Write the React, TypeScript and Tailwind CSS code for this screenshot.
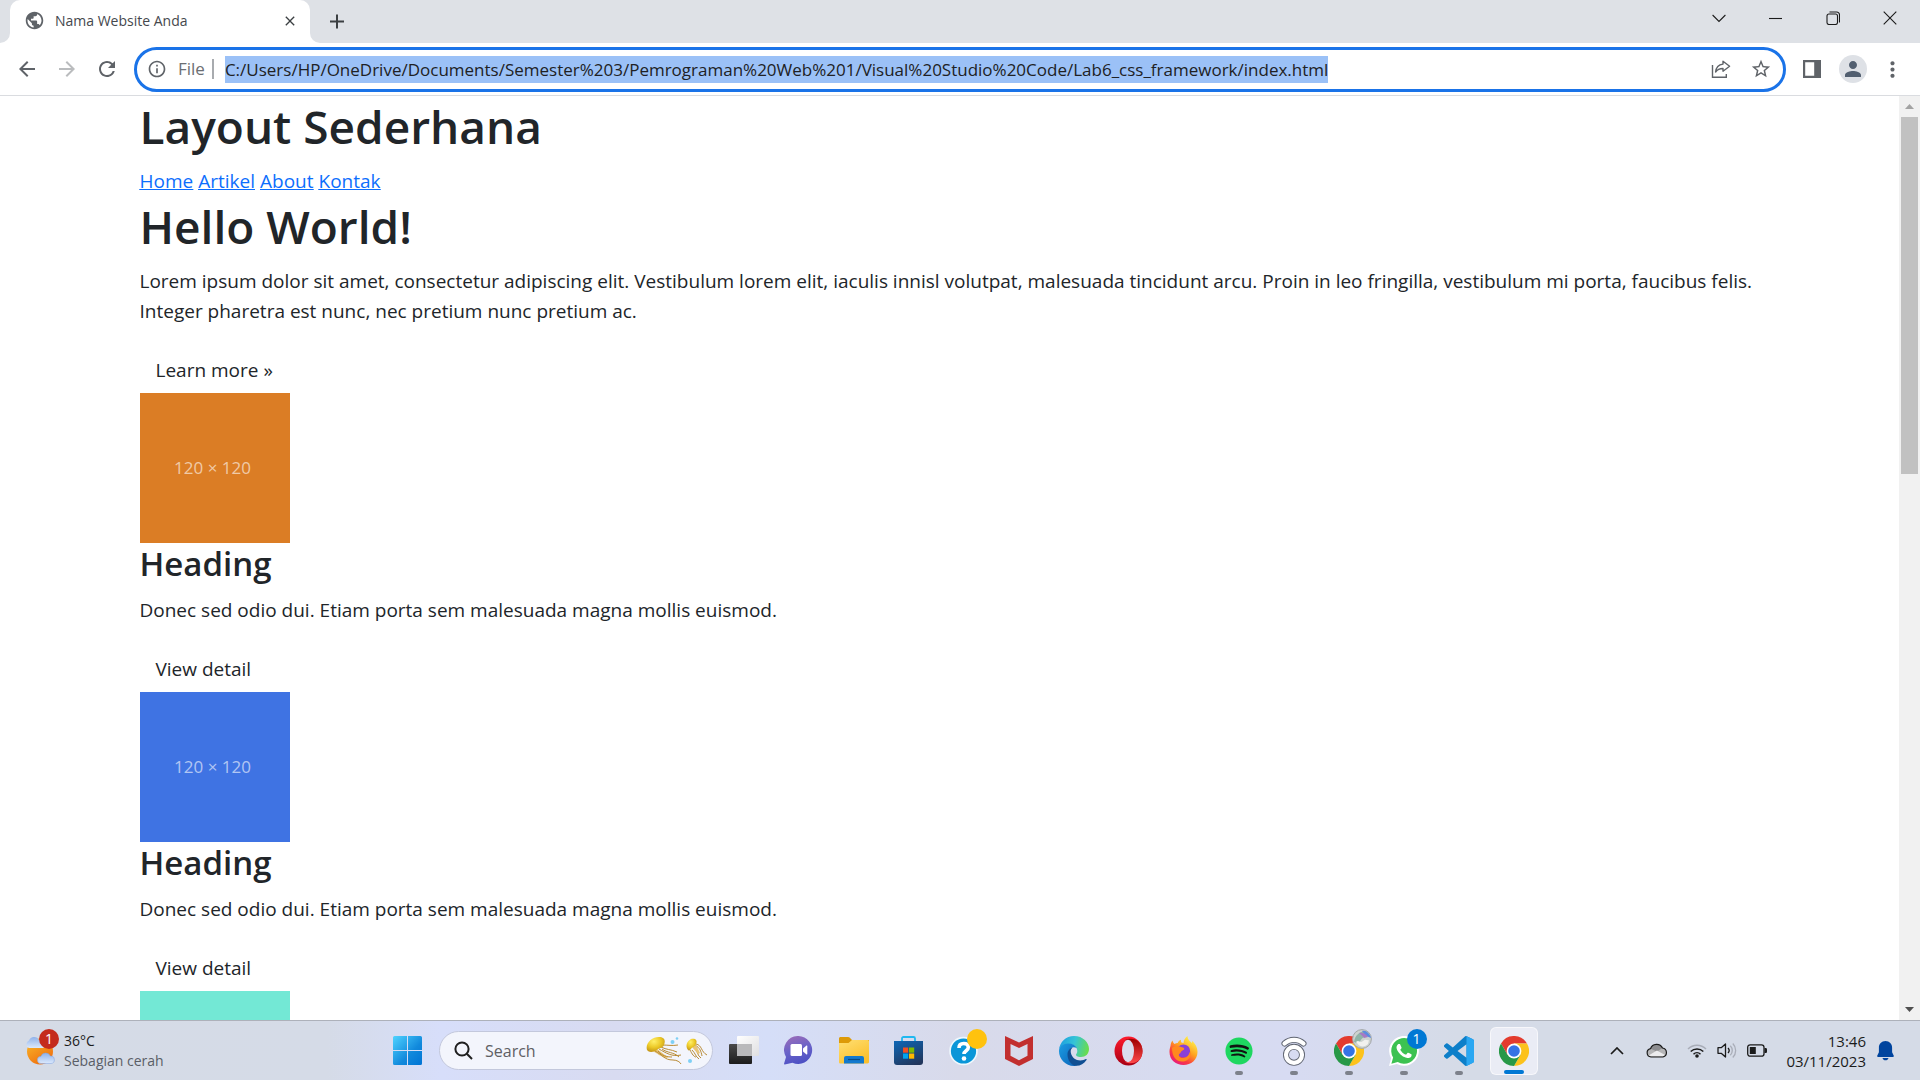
import type { ReactNode } from "react";
import {
  MdAdd,
  MdArrowBack,
  MdArrowForward,
  MdClose,
  MdInfoOutline,
  MdMoreVert,
  MdPerson,
  MdPublic,
  MdRefresh,
  MdStarBorder,
} from "react-icons/md";
import { FaSpotify } from "react-icons/fa";

const URL_TEXT =
  "C:/Users/HP/OneDrive/Documents/Semester%203/Pemrograman%20Web%201/Visual%20Studio%20Code/Lab6_css_framework/index.html";

/* ---------- Browser chrome ---------- */

function WindowButton({ label, children }: { label: string; children: ReactNode }) {
  return (
    <button aria-label={label} className="flex h-9 w-[57px] items-center justify-center">
      <svg width="14" height="14" viewBox="0 0 14 14" fill="none" stroke="#1b1b1b" strokeWidth="1.1">
        {children}
      </svg>
    </button>
  );
}

function TabStrip() {
  return (
    <div className="flex h-[43px] shrink-0 items-start bg-[#dee1e6] pr-[2px] pl-[10px]">
      <div className="relative flex h-[43px] w-[300px] items-center rounded-t-[10px] bg-white pr-[11px] pb-[2px] pl-[14px]">
        <svg className="absolute bottom-0 -left-[10px]" width="10" height="10" viewBox="0 0 10 10">
          <path d="M10 0v10H0A10 10 0 0 0 10 0z" fill="#fff" />
        </svg>
        <svg className="absolute -right-[10px] bottom-0" width="10" height="10" viewBox="0 0 10 10">
          <path d="M0 0v10h10A10 10 0 0 1 0 0z" fill="#fff" />
        </svg>
        <MdPublic size={21} color="#5f6368" />
        <span className="ml-[10px] flex-1 text-[14px] text-[#45484d]">Nama Website Anda</span>
        <button aria-label="Close tab" className="flex size-[18px] items-center justify-center text-[#3c4043]">
          <MdClose size={16} />
        </button>
      </div>
      <button aria-label="New tab" className="ml-[15px] flex h-[42px] w-6 items-center justify-center text-[#3c4043]">
        <MdAdd size={25} />
      </button>
      <div className="ml-auto flex">
        <WindowButton label="Search tabs">
          <path d="M.6 4l6.400 6.400L13.400 4" />
        </WindowButton>
        <WindowButton label="Minimize">
          <path d="M0 7.500h13" />
        </WindowButton>
        <WindowButton label="Restore">
          <rect x="1" y="3" width="10.500" height="10.500" rx="2" />
          <path d="M3.500 1h7.200a2.800 2.800 0 0 1 2.800 2.800v7.700" />
        </WindowButton>
        <WindowButton label="Close">
          <path d="M.7.7l12.600 12.600M13.300.7L.7 13.300" />
        </WindowButton>
      </div>
    </div>
  );
}

function Toolbar() {
  return (
    <div className="flex h-[53px] shrink-0 items-center border-b border-[#dadce0] bg-white pr-[15px] pl-[15px]">
      <button aria-label="Back" className="w-6 text-[#5f6368]">
        <MdArrowBack size={24} />
      </button>
      <button aria-label="Forward" className="ml-4 w-6 text-[#babcbe]">
        <MdArrowForward size={24} />
      </button>
      <button aria-label="Reload" className="ml-4 w-6 text-[#5f6368]">
        <MdRefresh size={24} />
      </button>
      <div className="ml-[15px] flex h-[45px] flex-1 items-center rounded-full border-[3px] border-[#1a73e8] pr-[11px] pl-[10px]">
        <MdInfoOutline size={20} color="#5f6368" />
        <label htmlFor="address" className="ml-[11px] text-[17px] text-[#6b6e73]">
          File
        </label>
        <span className="ml-[7px] h-5 w-[2px] bg-[#a8abaf]" />
        <input
          id="address"
          defaultValue={URL_TEXT}
          className="ml-[11px] h-[27px] field-sizing-content bg-[#9bc1f7] text-[17px] text-[#202124] outline-none"
        />
        <button aria-label="Share" className="ml-auto">
          <svg width="20" height="20" viewBox="0 0 20 20" fill="none" stroke="#5f6368" strokeWidth="1.400">
            <path d="M1.500 6v12.300h13.800V15" />
            <path d="M12 2.200l6.600 5-6.600 5V9.500c-3.500 0-5.700 1-7.400 3.500.4-4.200 3-7.400 7.400-7.900z" strokeLinejoin="round" />
          </svg>
        </button>
        <button aria-label="Bookmark this page" className="ml-[19px] text-[#5f6368]">
          <MdStarBorder size={22} />
        </button>
      </div>
      <button aria-label="Side panel" className="ml-[17px]">
        <svg width="18" height="18" viewBox="0 0 18 18">
          <path fill="#5f6368" fillRule="evenodd" d="M0 0h18v18H0zM2.200 2.200v13.600h9V2.200z" />
        </svg>
      </button>
      <button
        aria-label="Profile"
        className="ml-[18px] flex size-7 items-center justify-center rounded-full bg-[#dee1e6] text-[#525f70]"
      >
        <MdPerson size={24} />
      </button>
      <button aria-label="Menu" className="ml-[13px] text-[#5f6368]">
        <MdMoreVert size={25} />
      </button>
    </div>
  );
}

/* ---------- Web page ---------- */

function PageTitle({ children }: { children: ReactNode }) {
  return <h1 className="mb-[10px] text-[46px] leading-[60px] font-semibold">{children}</h1>;
}

function TextButton({ children }: { children: ReactNode }) {
  return <button className="block h-[47px] px-4 text-[19px] leading-[30px]">{children}</button>;
}

function Placeholder({ color }: { color: string }) {
  return (
    <div
      role="img"
      aria-label="120 × 120"
      className="flex size-[150px] items-center justify-center pr-1 text-[17px] text-white/60"
      style={{ backgroundColor: color }}
    >
      120 × 120
    </div>
  );
}

const boxes = ["#db7d25", "#3f73e3", "#73e8d5"];

function WebPage() {
  return (
    <div className="flex min-h-0 flex-1 bg-white">
      <div className="min-w-0 flex-1 overflow-hidden">
        <main className="mx-auto max-w-[1650px] px-[15px] text-[19px] leading-[30px] text-[#212529]">
          <PageTitle>Layout Sederhana</PageTitle>
          <nav className="flex gap-[5px] text-[#0d6efd] underline">
            <a href="#home">Home</a>
            <a href="#artikel">Artikel</a>
            <a href="#about">About</a>
            <a href="#kontak">Kontak</a>
          </nav>
          <PageTitle>Hello World!</PageTitle>
          <p className="mb-5">
            Lorem ipsum dolor sit amet, consectetur adipiscing elit. Vestibulum lorem elit, iaculis innisl volutpat,
            malesuada tincidunt arcu. Proin in leo fringilla, vestibulum mi porta, faucibus felis. Integer pharetra est
            nunc, nec pretium nunc pretium ac.
          </p>
          <TextButton>Learn more »</TextButton>
          {boxes.map((color) => (
            <section key={color}>
              <Placeholder color={color} />
              <h3 className="mb-[10px] text-[33px] leading-[42px] font-semibold">Heading</h3>
              <p className="mb-5">Donec sed odio dui. Etiam porta sem malesuada magna mollis euismod.</p>
              <TextButton>View detail</TextButton>
            </section>
          ))}
        </main>
      </div>
      <div className="flex w-[21px] shrink-0 flex-col items-center bg-[#f1f1f1]">
        <svg className="h-[21px] shrink-0" width="9" height="5" viewBox="0 0 9 5">
          <path d="M4.500 0L9 5H0z" fill="#a3a3a3" />
        </svg>
        <div className="min-h-0 w-[17px] flex-1">
          <div className="h-[357px] bg-[#c1c1c1]" />
        </div>
        <svg className="h-[21px] shrink-0" width="9" height="5" viewBox="0 0 9 5">
          <path d="M4.500 5L9 0H0z" fill="#505050" />
        </svg>
      </div>
    </div>
  );
}

/* ---------- Taskbar icons ---------- */

function WeatherIcon() {
  return (
    <svg width="30" height="30" viewBox="0 0 30 30">
      <defs>
        <linearGradient id="sun" x1="0" y1="0" x2=".6" y2="1">
          <stop offset="0" stopColor="#f9bd2b" />
          <stop offset="1" stopColor="#f0700f" />
        </linearGradient>
        <linearGradient id="wcloud" x1="0" y1="0" x2="0" y2="1">
          <stop offset="0" stopColor="#8fb2ea" />
          <stop offset="1" stopColor="#dce9fc" />
        </linearGradient>
      </defs>
      <circle cx="15" cy="15.500" r="13" fill="url(#sun)" />
      <path d="M4 12a4 4 0 0 1 0-7.500A5.500 5.500 0 0 1 14 4a4 4 0 0 1 4 8z" fill="url(#wcloud)" />
      <path
        d="M16 27.500a3.600 3.600 0 0 1 0-7.200 5 5 0 0 1 9.300-.2 3.700 3.700 0 0 1 .7 7.400z"
        fill="url(#wcloud)"
        stroke="#7fa3e0"
        strokeWidth=".5"
      />
    </svg>
  );
}

function StartIcon() {
  return (
    <svg width="29" height="29" viewBox="0 0 29 29">
      <defs>
        <linearGradient id="win" gradientUnits="userSpaceOnUse" x1="0" y1="0" x2="29" y2="29">
          <stop offset="0" stopColor="#4fd3ff" />
          <stop offset=".6" stopColor="#1189dc" />
          <stop offset="1" stopColor="#0073d4" />
        </linearGradient>
      </defs>
      <path
        fill="url(#win)"
        d="M1.500 0H14v14H0V1.500A1.500 1.500 0 0 1 1.500 0zM15 0h12.500A1.500 1.500 0 0 1 29 1.500V14H15zM0 15h14v14H1.500A1.500 1.500 0 0 1 0 27.500zM15 15h14v12.500a1.500 1.500 0 0 1-1.500 1.500H15z"
      />
    </svg>
  );
}

function Jellyfish() {
  return (
    <svg width="62" height="30" viewBox="0 0 62 30" fill="none">
      <defs>
        <radialGradient id="jelly" cx=".4" cy=".3" r=".8">
          <stop offset="0" stopColor="#fff06a" />
          <stop offset=".5" stopColor="#ecc927" />
          <stop offset="1" stopColor="#b98812" />
        </radialGradient>
      </defs>
      <path d="M9 12c5 2 8 7 14 9l-3 1c-5-1-9-5-14-7z" fill="#e8c477" />
      <path
        d="M16 9c6 0 10 1 16 0M15 11c6 3 9 2 16 5M13 13c7 4 13 8 22 6M9 15c8 4 9 9 18 9 4 0 7 2 8 4M16 13c5 4 12 3 17 8M12 15c4 5 9 6 14 6"
        stroke="#b98b35"
        strokeWidth="1"
      />
      <path d="M1 14C-1 7 6 1 13 1c5 0 7 3 5 8-1 3-5 3-7 5-3 2-8 3-10 0z" fill="url(#jelly)" />
      <path
        d="M48 12c4 2 3 8 7 10M46 14c4 4 3 6 7 9M49 9c5 3 6 6 7 11M50 8c6 1 5 8 11 11M44 14c2 4 4 7 6 7"
        stroke="#b98b35"
        strokeWidth="1"
      />
      <path d="M46 11l6 7 2-1-4-8z" fill="#e8c477" />
      <path d="M42 14c-3-4-1-9 3-11 4-1 7 1 5 5-1 3-4 3-5 5-1 1-2 2-3 1z" fill="url(#jelly)" />
      <circle cx="26.500" cy="6" r="2" fill="#7fd0f5" />
      <circle cx="31" cy="2.500" r="1.300" fill="#7fd0f5" />
      <circle cx="44" cy="25" r="2" fill="#7fd0f5" />
    </svg>
  );
}

function TaskViewIcon() {
  return (
    <svg width="30" height="29" viewBox="0 0 30 29">
      <defs>
        <linearGradient id="tvd" x1="0" y1="0" x2="0" y2="1">
          <stop offset="0" stopColor="#4a4a4a" />
          <stop offset="1" stopColor="#1c1c1c" />
        </linearGradient>
        <linearGradient id="tvl" x1="0" y1="0" x2="1" y2="1">
          <stop offset="0" stopColor="#ffffff" />
          <stop offset="1" stopColor="#dfdfe1" />
        </linearGradient>
      </defs>
      <rect y="8" width="23" height="20" rx="1" fill="url(#tvd)" />
      <rect x="8" y="0" width="22" height="20" rx="1" fill="url(#tvl)" />
      <path d="M8 8h15v12H8z" fill="#b9b9bb" />
    </svg>
  );
}

function ChatIcon() {
  return (
    <svg width="29" height="29" viewBox="0 0 29 29">
      <defs>
        <linearGradient id="chat" x1=".2" y1="0" x2=".5" y2="1">
          <stop offset="0" stopColor="#9a6cb8" />
          <stop offset=".5" stopColor="#6a63c8" />
          <stop offset="1" stopColor="#4c50c4" />
        </linearGradient>
      </defs>
      <path d="M14.500 0a14 14 0 1 1-6 26.800L.8 28.400c-.6.1-.9-.3-.7-.9L2 21A14 14 0 0 1 14.500 0z" fill="url(#chat)" />
      <rect x="6.500" y="8" width="11.500" height="12" rx="1.500" fill="#fff" />
      <path d="M19 12.500l3.500-3c.4-.3.800 0 .8.400v8.200c0 .4-.4.700-.8.400l-3.500-3z" fill="#fff" />
    </svg>
  );
}

function FolderIcon() {
  return (
    <svg width="30" height="28" viewBox="0 0 30 28">
      <defs>
        <linearGradient id="fold" x1="0" y1="0" x2=".6" y2="1">
          <stop offset="0" stopColor="#ffdf73" />
          <stop offset="1" stopColor="#fbc02d" />
        </linearGradient>
      </defs>
      <path d="M0 1.500C0 .7.700 0 1.500 0h7.700c.6 0 1 .2 1.400.6L13 3H30v6H0z" fill="#dd9a08" />
      <path d="M0 6h9.500L13 3h15.500c.8 0 1.500.7 1.500 1.500V25c0 .600-.5 1.500-1.500 1.500h-27C.700 26.500 0 26 0 25z" fill="url(#fold)" />
      <path d="M5 26.500V21a2 2 0 0 1 2-2h16a2 2 0 0 1 2 2v5.500z" fill="#1379ce" />
      <path d="M9 22.500h12" stroke="#084a86" strokeWidth="1.200" />
    </svg>
  );
}

function StoreIcon() {
  return (
    <svg width="29" height="30" viewBox="0 0 29 30">
      <defs>
        <linearGradient id="store" x1=".2" y1="0" x2=".7" y2="1">
          <stop offset="0" stopColor="#0f63b0" />
          <stop offset="1" stopColor="#21365c" />
        </linearGradient>
      </defs>
      <path d="M8 7V2.500C8 1.700 8.700 1 9.500 1h10c.8 0 1.500.7 1.500 1.500V7" fill="none" stroke="#1fb8f0" strokeWidth="1.800" />
      <path d="M0 5h29v21a3 3 0 0 1-3 3H3a3 3 0 0 1-3-3z" fill="url(#store)" />
      <path d="M9 11.500h5.200v5.200H9z" fill="#f25022" />
      <path d="M15 11.500h5.200v5.200H15z" fill="#7fba00" />
      <path d="M9 17.500h5.200v5.200H9z" fill="#00a4ef" />
      <path d="M15 17.500h5.200v5.200H15z" fill="#ffb900" />
    </svg>
  );
}

function HelpIcon() {
  return (
    <svg width="30" height="30" viewBox="0 0 30 30">
      <circle cx="14.500" cy="15" r="14.300" fill="#eef8fd" />
      <circle cx="14.500" cy="15" r="12.600" fill="#0a96d8" />
      <path d="M10 12c0-3 2-4.500 4.700-4.500 2.800 0 4.600 1.500 4.600 3.900 0 3.300-4.300 3.300-4.300 6.600" fill="none" stroke="#fff" strokeWidth="3.600" />
      <circle cx="15" cy="22.500" r="2.300" fill="#fff" />
    </svg>
  );
}

function McAfeeIcon() {
  return (
    <svg width="28" height="30" viewBox="0 0 28 30">
      <path
        fillRule="evenodd"
        fill="#c22f2f"
        d="M0 0l14 6.500L28 0v23L14 30 0 23zM5.500 8v11.800l8.500 4.400 8.500-4.400V8L14 12z"
      />
    </svg>
  );
}

function EdgeIcon() {
  return (
    <svg width="30" height="30" viewBox="0 0 30 30">
      <defs>
        <linearGradient id="edgeTop" x1="0" y1=".3" x2="1" y2=".5">
          <stop offset="0" stopColor="#1d9fe0" />
          <stop offset=".5" stopColor="#35c4d6" />
          <stop offset="1" stopColor="#69dd4c" />
        </linearGradient>
        <linearGradient id="edgeLow" x1="0" y1="0" x2="1" y2="1">
          <stop offset="0" stopColor="#1b9de2" />
          <stop offset="1" stopColor="#0b61b8" />
        </linearGradient>
      </defs>
      <path
        fill="url(#edgeTop)"
        d="M0 14C.7 6 7 0 15 0c9 0 15 6.500 15 13 0 5-3.500 8-8 8-4 0-5-1.500-5-2.300 0-.7 1.300-1.300 1.300-3.700C18.300 11 14.500 8 9.500 8 4 8 .8 11 0 14z"
      />
      <path
        fill="url(#edgeLow)"
        d="M0 15C0 10.500 4 7.500 9 7.500c4.500 0 7.500 2 8.800 4.500-1-.6-2-.8-3-.8-4 0-5.500 4-5.500 7 0 6 4 11 9 11.200-1 .4-2 .6-3.300.6C6.500 30 0 23 0 15z"
      />
      <path
        fill="#104f93"
        d="M8.500 18.500c0-3.500 2-6.500 5-7-1.500 1.500-2 3-1.700 5 .8 5 5 8 9.500 8 2.500 0 4.200-.8 5.500-1.400.7-.300 1.100.2.700.8C25 27.500 21.500 29.800 17.500 29.800 12 29.500 8.500 24 8.500 18.500z"
      />
    </svg>
  );
}

function OperaIcon() {
  return (
    <svg width="29" height="30" viewBox="0 0 29 30">
      <defs>
        <linearGradient id="opera" x1="0" y1="0" x2="0" y2="1">
          <stop offset="0" stopColor="#ff1b2d" />
          <stop offset="1" stopColor="#a70014" />
        </linearGradient>
        <linearGradient id="operaR" x1="0" y1="0" x2="0" y2="1">
          <stop offset="0" stopColor="#9c0000" />
          <stop offset="1" stopColor="#ff4b4b" />
        </linearGradient>
      </defs>
      <ellipse cx="14.500" cy="15" rx="14" ry="14.500" fill="url(#opera)" />
      <path fill="url(#operaR)" d="M10 4.500C18 0 28.500 4 28.500 15S18 30 10 25.500c5 1.500 10-4 10-10.500S15 3.500 10 4.500z" />
      <ellipse cx="14" cy="15" rx="6" ry="11.200" fill="#dadeee" />
    </svg>
  );
}

function FirefoxIcon() {
  return (
    <svg width="29" height="30" viewBox="0 0 29 30">
      <defs>
        <linearGradient id="ff" x1=".8" y1=".1" x2=".2" y2="1">
          <stop offset="0" stopColor="#fff04a" />
          <stop offset=".4" stopColor="#ffa01f" />
          <stop offset=".7" stopColor="#fb3c40" />
          <stop offset="1" stopColor="#e31587" />
        </linearGradient>
      </defs>
      <path
        fill="url(#ff)"
        d="M3.500 4.500c.3 1.500 1 2.500 2 3.500 1-.6 2-.9 3.200-.9C9.300 5.500 10.300 4.400 12 3.700c-.2 1 0 2 .4 2.800l2.100.5C14.500 4 16.500 1.500 18.500 0c0 3.500 2 5 4.500 7 .3-.7.300-1.500 0-2.300 3 2.600 5.500 6.300 5.500 11.200C28.500 23.500 22 29 14.500 29 7 29 .5 24 .5 16 .5 13 1 12 1.500 10c.2-2 .7-4 2-5.500z"
      />
      <circle cx="14.500" cy="15" r="6.600" fill="#8a3fd6" />
      <path d="M3 12c4-4 9-1 11-.5 1.500.5 2 2-.5 3-2 1-1.500 2.500-3 3.200C9 18.500 10 22 14 22c5 0 6-4 7.500-7 1.500 8-5 11-9 10.500C5 25 3 18 3 12z" fill="#ff8a1e" />
    </svg>
  );
}

function CameraIcon() {
  return (
    <svg width="26" height="30" viewBox="0 0 26 30" fill="none">
      <path d="M3.500 7.500a14 14 0 0 1 19 0" stroke="#5f6470" strokeWidth="6" strokeLinecap="round" />
      <circle cx="13" cy="18.800" r="8" stroke="#5f6470" strokeWidth="6" />
      <path d="M3.500 7.500a14 14 0 0 1 19 0" stroke="#fff" strokeWidth="4.200" strokeLinecap="round" />
      <circle cx="13" cy="18.800" r="8" stroke="#fff" strokeWidth="4.200" />
    </svg>
  );
}

function ChromeIcon() {
  return (
    <svg width="30" height="30" viewBox="0 0 30 30">
      <path d="M2 7.500A15 15 0 0 1 28 7.500H15v7.500L8.500 18.700z" fill="#e33b2e" />
      <path d="M28 7.500A15 15 0 0 1 15 30l6.500-11.300L15 15V7.500z" fill="#fcc21b" />
      <path d="M15 30A15 15 0 0 1 2 7.500l6.500 11.200L15 15l6.500 3.700z" fill="#279847" />
      <circle cx="15" cy="15" r="7.400" fill="#fff" />
      <circle cx="15" cy="15" r="5.800" fill="#3573e5" />
    </svg>
  );
}

function WhatsAppIcon() {
  return (
    <svg width="30" height="30" viewBox="0 0 24 24">
      <path d="M0 24l1.700-6.200A11.900 11.900 0 1 1 6.300 22.300z" fill="#fff" />
      <path d="M1.900 22.200l1.400-5A10.300 10.300 0 1 1 7 20.800z" fill="#3cc251" />
      <path
        fill="#fff"
        d="M17.472 14.382c-.297-.149-1.758-.867-2.030-.967-.273-.099-.471-.148-.67.15-.197.297-.767.966-.94 1.164-.173.199-.347.223-.644.075-.297-.15-1.255-.463-2.390-1.475-.883-.788-1.480-1.761-1.653-2.059-.173-.297-.018-.458.13-.606.134-.133.298-.347.446-.52.149-.174.198-.298.298-.497.099-.198.05-.371-.025-.52-.075-.149-.669-1.612-.916-2.207-.242-.579-.487-.5-.669-.51-.173-.008-.371-.01-.57-.01-.198 0-.52.074-.792.372-.272.297-1.040 1.016-1.040 2.479 0 1.462 1.065 2.875 1.213 3.074.149.198 2.096 3.200 5.077 4.487.709.306 1.262.489 1.694.625.712.227 1.360.195 1.871.118.571-.085 1.758-.719 2.006-1.413.248-.694.248-1.289.173-1.413-.074-.124-.272-.198-.57-.347"
      />
    </svg>
  );
}

function VSCodeIcon() {
  return (
    <svg width="30" height="30" viewBox="0 0 24 24">
      <path
        fill="#0d7fc9"
        d="M23.150 2.587L18.210.21a1.494 1.494 0 0 0-1.705.29l-9.460 8.630-4.120-3.128a.999.999 0 0 0-1.276.057L.327 7.261A1 1 0 0 0 .326 8.740L3.899 12 .326 15.260a1 1 0 0 0 .001 1.479L1.650 17.940a.999.999 0 0 0 1.276.057l4.120-3.128 9.460 8.630a1.492 1.492 0 0 0 1.704.29l4.942-2.377A1.500 1.500 0 0 0 24 20.060V3.939a1.500 1.500 0 0 0-.85-1.352zm-5.146 14.861L10.826 12l7.178-5.448v10.896z"
      />
      <path fill="#2aa7f2" d="M18 .1l5.200 2.500c.5.300.8.800.8 1.300v16.200c0 .5-.3 1-.8 1.300L18 23.900z" />
    </svg>
  );
}

function GlobeBadge() {
  return (
    <svg width="20" height="20" viewBox="0 0 20 20">
      <circle cx="10" cy="10" r="9.400" fill="#cdd3d0" stroke="#a2a6a8" />
      <path d="M2 13C3 6 8 2 14 2l4 5c-6 0-9 2-11 8z" fill="#8fb4a8" />
      <path d="M10 2c4-1 8 3 9 7l-5-2z" fill="#5c8be0" />
      <path d="M7 4c4-1 7 1 9 4l-4 1c-1-2-3-3-5-5z" fill="#a779c4" />
      <path d="M4 13c3-3 4 2 7-1s4 0 6-1l-1 4c-3 3-8 4-12-2z" fill="#f1f1ee" />
    </svg>
  );
}

type AppEntry = { name: string; icon: ReactNode; badge?: ReactNode; running?: boolean; active?: boolean };

const apps: AppEntry[] = [
  { name: "Task view", icon: <TaskViewIcon /> },
  { name: "Chat", icon: <ChatIcon /> },
  { name: "File Explorer", icon: <FolderIcon /> },
  { name: "Microsoft Store", icon: <StoreIcon /> },
  { name: "Get Help", icon: <HelpIcon />, badge: <span className="block size-5 rounded-full bg-[#ffc20e]" /> },
  { name: "McAfee", icon: <McAfeeIcon /> },
  { name: "Microsoft Edge", icon: <EdgeIcon /> },
  { name: "Opera", icon: <OperaIcon /> },
  { name: "Firefox", icon: <FirefoxIcon /> },
  {
    name: "Spotify",
    icon: (
      <span className="rounded-full bg-[radial-gradient(#111_60%,transparent_62%)]">
        <FaSpotify size={28} color="#1ed760" />
      </span>
    ),
    running: true,
  },
  { name: "Camera viewer", icon: <CameraIcon />, running: true },
  { name: "Chrome profile", icon: <ChromeIcon />, badge: <GlobeBadge />, running: true },
  {
    name: "WhatsApp",
    icon: <WhatsAppIcon />,
    badge: (
      <span className="flex size-5 items-center justify-center rounded-full bg-[#0078d4] text-[14px] text-white">1</span>
    ),
    running: true,
  },
  { name: "Visual Studio Code", icon: <VSCodeIcon />, running: true },
  { name: "Google Chrome", icon: <ChromeIcon />, active: true },
];

function TaskbarApp({ name, icon, badge, running, active }: AppEntry) {
  return (
    <button aria-label={name} className="flex h-[59px] w-[55px] items-center justify-center">
      <span
        className={
          active
            ? "relative flex size-12 items-center justify-center rounded-md border border-white/60 bg-[#eaecf5]"
            : "relative flex size-12 items-center justify-center"
        }
      >
        {icon}
        {badge && <span className="absolute top-[2px] right-px">{badge}</span>}
        {running && <span className="absolute bottom-0 h-1 w-2 rounded-full bg-[#7d818b]" />}
        {active && <span className="absolute bottom-0 h-1 w-5 rounded-full bg-[#0078d4]" />}
      </span>
    </button>
  );
}

function SystemTray() {
  return (
    <div className="ml-auto flex items-center pr-[26px] text-[#1b1b1b]">
      <button aria-label="Show hidden icons">
        <svg width="14" height="8" viewBox="0 0 14 8" fill="none" stroke="currentColor" strokeWidth="1.700">
          <path d="M1 7l6-6 6 6" />
        </svg>
      </button>
      <button aria-label="OneDrive" className="ml-[22px]">
        <svg width="22" height="15" viewBox="0 0 22 15">
          <path d="M5 14a4.200 4.200 0 0 1-.5-8.300A6.500 6.500 0 0 1 16.500 5 4.600 4.600 0 0 1 17 14z" fill="#b5b5b7" />
          <path d="M4.500 5.700A6.500 6.500 0 0 1 16.500 5L11 8.500z" fill="#8c8c8f" />
          <path d="M2.500 12.500L11 7.500l8.500 4.700A4 4 0 0 1 17 13.300H5c-1 0-2-.3-2.500-.8z" fill="#ececee" />
          <path
            d="M5 14a4.200 4.200 0 0 1-.5-8.300A6.500 6.500 0 0 1 16.500 5 4.600 4.600 0 0 1 17 14z"
            fill="none"
            stroke="#1b1b1b"
            strokeWidth="1.200"
          />
        </svg>
      </button>
      <button aria-label="Network, sound and battery" className="ml-[19px] flex items-center gap-[10px]">
        <svg width="20" height="15" viewBox="0 0 20 15" fill="none" strokeWidth="1.500">
          <path d="M1 6a12.700 12.700 0 0 1 18 0" stroke="#a9adb8" />
          <path d="M3.700 8.500a9 9 0 0 1 12.600 0M6.500 11.200a5 5 0 0 1 7 0" stroke="currentColor" />
          <circle cx="10" cy="13" r="1.800" fill="currentColor" />
        </svg>
        <svg width="20" height="17" viewBox="0 0 20 17" fill="none" strokeWidth="1.300">
          <path d="M1 5.700h3.200L8.500 2v13l-4.300-3.700H1z" stroke="currentColor" strokeLinejoin="round" />
          <path d="M11 6a3.600 3.600 0 0 1 0 5" stroke="currentColor" />
          <path d="M13.300 3.700a6.800 6.800 0 0 1 0 9.600M15.800 1.500a10 10 0 0 1 0 14" stroke="#a9adb8" />
        </svg>
        <svg width="20" height="13" viewBox="0 0 20 13">
          <rect x=".7" y=".8" width="16.300" height="11.400" rx="2.500" fill="none" stroke="currentColor" strokeWidth="1.300" />
          <rect x="2.800" y="3" width="6" height="7" fill="currentColor" />
          <path d="M17.500 4h1.200c.7 0 1.300.6 1.300 1.300v2.400c0 .7-.6 1.300-1.300 1.300h-1.200z" fill="currentColor" />
        </svg>
      </button>
      <button aria-label="Clock" className="ml-[19px] text-right text-[15px] leading-5">
        <span className="block">13:46</span>
        <span className="block">03/11/2023</span>
      </button>
      <button aria-label="Notifications" className="ml-[11px]">
        <svg width="17" height="20" viewBox="0 0 17 20">
          <path
            fill="#00449e"
            d="M8.500 0c4 0 6.600 3 6.600 6.700v4.500l1.700 3.600c.2.600-.1 1.200-.8 1.200H1c-.7 0-1-.6-.8-1.200l1.700-3.600V6.700C1.900 3 4.500 0 8.500 0zM5.500 17h6c-.4 1.500-1.500 2.300-3 2.300s-2.600-.8-3-2.300z"
          />
        </svg>
      </button>
    </div>
  );
}

function Taskbar() {
  return (
    <footer className="flex h-[60px] shrink-0 items-center border-t border-[#adb1ba] bg-[linear-gradient(90deg,#d5dbe6_0%,#d5dbe7_17%,#d7defa_23%,#d8dbf1_32%,#d5def8_40%,#d8daea_50%,#d7dbf0_62%,#d7dbf2_67%,#d5dbe7_76%,#d5dbe7_100%)]">
      <div className="w-[380px] shrink-0 pl-[25px]">
        <button className="flex items-center text-left">
          <span className="relative">
            <WeatherIcon />
            <span className="absolute -top-[7px] left-[14px] flex size-5 items-center justify-center rounded-full bg-[#c42b1c] text-[14px] text-white">
              1
            </span>
          </span>
          <span className="ml-[9px] text-[14px] leading-5">
            <span className="block text-[#1b1b1b]">36°C</span>
            <span className="block text-[#5a5e66]">Sebagian cerah</span>
          </span>
        </button>
      </div>
      <button aria-label="Start" className="flex w-[55px] items-center justify-center">
        <StartIcon />
      </button>
      <label className="ml-1 flex h-[39px] w-[274px] items-center rounded-full border border-[#c3c8dc] bg-[#f3f5fc] pr-1 pl-[14px]">
        <svg width="19" height="19" viewBox="0 0 19 19" fill="none" stroke="#1f1f1f" strokeWidth="2">
          <circle cx="8" cy="8" r="6.600" />
          <path d="M12.800 12.800l5.200 5.200" />
        </svg>
        <input
          aria-label="Search"
          placeholder="Search"
          className="ml-[12px] w-0 min-w-0 flex-1 bg-transparent text-[16px] outline-none placeholder:text-[#5f6064]"
        />
        <Jellyfish />
      </label>
      <div className="ml-[3px] flex">
        {apps.map((app) => (
          <TaskbarApp key={app.name} {...app} />
        ))}
      </div>
      <SystemTray />
    </footer>
  );
}

export default function App() {
  return (
    <div className="flex h-screen flex-col overflow-hidden font-['Open_Sans','Noto_Sans',sans-serif]">
      <TabStrip />
      <Toolbar />
      <WebPage />
      <Taskbar />
    </div>
  );
}
